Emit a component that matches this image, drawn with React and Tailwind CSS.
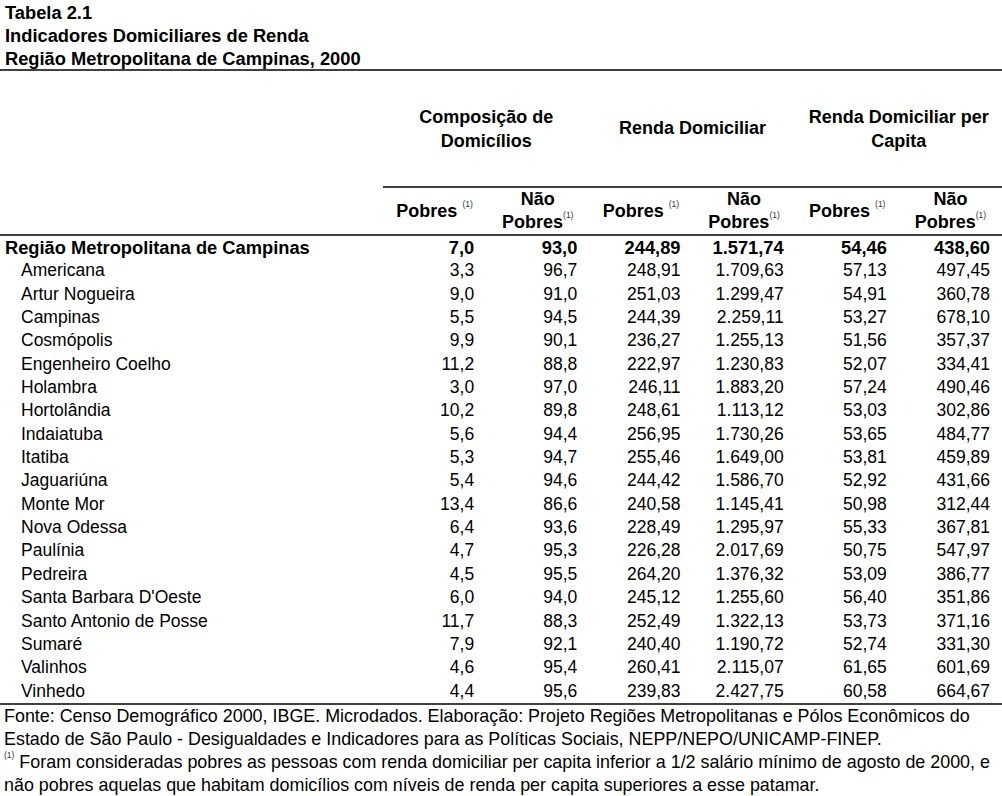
import React from "react"

const total = ["Região Metropolitana de Campinas", "7,0", "93,0", "244,89", "1.571,74", "54,46", "438,60"]

const municipios = [
  ["Americana", "3,3", "96,7", "248,91", "1.709,63", "57,13", "497,45"],
  ["Artur Nogueira", "9,0", "91,0", "251,03", "1.299,47", "54,91", "360,78"],
  ["Campinas", "5,5", "94,5", "244,39", "2.259,11", "53,27", "678,10"],
  ["Cosmópolis", "9,9", "90,1", "236,27", "1.255,13", "51,56", "357,37"],
  ["Engenheiro Coelho", "11,2", "88,8", "222,97", "1.230,83", "52,07", "334,41"],
  ["Holambra", "3,0", "97,0", "246,11", "1.883,20", "57,24", "490,46"],
  ["Hortolândia", "10,2", "89,8", "248,61", "1.113,12", "53,03", "302,86"],
  ["Indaiatuba", "5,6", "94,4", "256,95", "1.730,26", "53,65", "484,77"],
  ["Itatiba", "5,3", "94,7", "255,46", "1.649,00", "53,81", "459,89"],
  ["Jaguariúna", "5,4", "94,6", "244,42", "1.586,70", "52,92", "431,66"],
  ["Monte Mor", "13,4", "86,6", "240,58", "1.145,41", "50,98", "312,44"],
  ["Nova Odessa", "6,4", "93,6", "228,49", "1.295,97", "55,33", "367,81"],
  ["Paulínia", "4,7", "95,3", "226,28", "2.017,69", "50,75", "547,97"],
  ["Pedreira", "4,5", "95,5", "264,20", "1.376,32", "53,09", "386,77"],
  ["Santa Barbara D'Oeste", "6,0", "94,0", "245,12", "1.255,60", "56,40", "351,86"],
  ["Santo Antonio de Posse", "11,7", "88,3", "252,49", "1.322,13", "53,73", "371,16"],
  ["Sumaré", "7,9", "92,1", "240,40", "1.190,72", "52,74", "331,30"],
  ["Valinhos", "4,6", "95,4", "260,41", "2.115,07", "61,65", "601,69"],
  ["Vinhedo", "4,4", "95,6", "239,83", "2.427,75", "60,58", "664,67"],
]

function Nota() {
  return <sup className="text-[8.5px] font-normal text-[#333] relative -top-[3px] align-super">(1)</sup>
}

function Pobres() {
  return (
    <div className="flex items-center justify-center h-full">
      <span>Pobres <Nota /></span>
    </div>
  )
}

function NaoPobres() {
  return (
    <div className="flex flex-col items-center justify-center h-full leading-[23px]">
      <span>Não</span>
      <span>Pobres<Nota /></span>
    </div>
  )
}

function Linha({ dados, destaque }) {
  const [nome, ...valores] = dados
  return (
    <div className={`grid grid-cols-[383px_repeat(6,1fr)] h-[23.35px] leading-[23.35px] ${destaque ? "font-bold text-[18.3px]" : "text-[17.5px]"}`}>
      <div className={`whitespace-nowrap ${destaque ? "pl-[5px]" : "pl-[21px]"}`}>{nome}</div>
      {valores.map((v, i) => (
        <div key={i} className="text-right pr-[12px]">{v}</div>
      ))}
    </div>
  )
}

export default function App() {
  return (
    <div className="w-[1002px] h-[796px] bg-white text-black overflow-hidden font-['Liberation_Sans',Arial,sans-serif]">
      {/* titulo */}
      <div className="pl-[5px] pt-[1px] font-bold text-[18.3px] leading-[23px] h-[71px] border-b-2 border-[#404040]">
        <div>Tabela 2.1</div>
        <div>Indicadores Domiciliares de Renda</div>
        <div>Região Metropolitana de Campinas, 2000</div>
      </div>

      {/* cabecalho */}
      <div className="grid grid-cols-[383px_repeat(6,1fr)] font-bold text-[18px] border-b-2 border-[#404040]">
        <div className="h-[115px]" />
        <div className="col-span-2 flex flex-col items-center justify-center leading-[24px] text-center">
          <span>Composição de</span>
          <span>Domicílios</span>
        </div>
        <div className="col-span-2 flex items-center justify-center">Renda Domiciliar</div>
        <div className="col-span-2 flex flex-col items-center justify-center leading-[24px] text-center">
          <span>Renda Domiciliar per</span>
          <span>Capita</span>
        </div>

        <div className="h-[47px]" />
        <div className="col-span-6 grid grid-cols-6 border-t-2 border-[#404040]">
          <Pobres />
          <NaoPobres />
          <Pobres />
          <NaoPobres />
          <Pobres />
          <NaoPobres />
        </div>
      </div>

      {/* dados */}
      <div className="border-b-2 border-[#404040]">
        <Linha dados={total} destaque />
        {municipios.map((m) => (
          <Linha key={m[0]} dados={m} />
        ))}
      </div>

      {/* fonte e notas */}
      <div className="pl-[4px] text-[17.9px] leading-[23px] whitespace-nowrap">
        <div>Fonte: Censo Demográfico 2000, IBGE. Microdados. Elaboração: Projeto Regiões Metropolitanas e Pólos Econômicos do</div>
        <div>Estado de São Paulo - Desigualdades e Indicadores para as Políticas Sociais, NEPP/NEPO/UNICAMP-FINEP.</div>
        <div><Nota /> Foram consideradas pobres as pessoas com renda domiciliar per capita inferior a 1/2 salário mínimo de agosto de 2000, e</div>
        <div>não pobres aquelas que habitam domicílios com níveis de renda per capita superiores a esse patamar.</div>
      </div>
    </div>
  )
}
